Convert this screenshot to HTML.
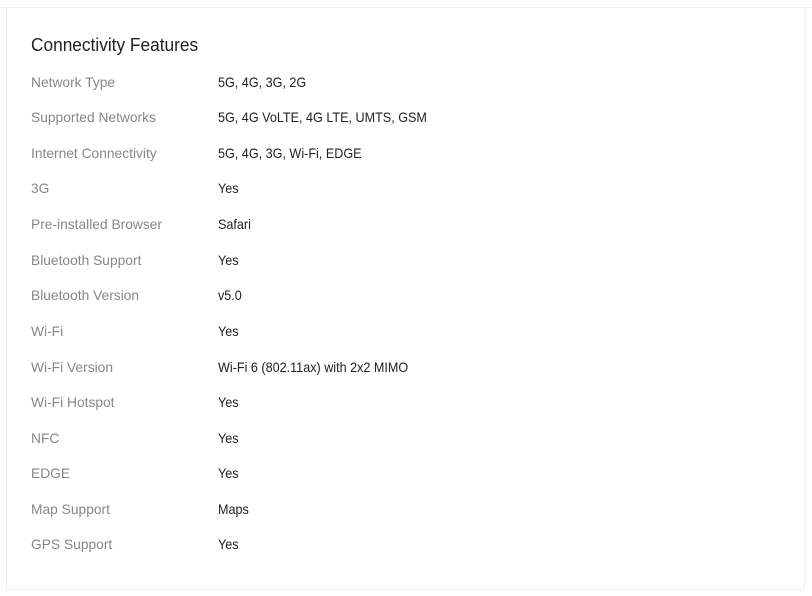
<!DOCTYPE html>
<html><head><meta charset="utf-8"><style>
body{margin:0;background:#fff;font-family:"Liberation Sans",Arial,sans-serif;}
.top{position:absolute;left:0;top:7px;width:812px;height:1px;background:#f0f0f0}
.box{position:absolute;left:6px;top:8px;width:797px;height:581px;border-left:1px solid #f0f0f0;border-right:1px solid #f0f0f0;border-bottom:1px solid #f0f0f0;background:#fff}
h2{position:absolute;left:31px;top:34px;margin:0;font-size:18px;font-weight:normal;color:#212121;line-height:22px;transform:scaleX(0.96);transform-origin:left}
.row{position:absolute;left:31px;font-size:14px;line-height:18px;height:18px}
.l{position:absolute;left:0;color:#878787;white-space:nowrap;transform:scaleX(0.985);transform-origin:left}
.v{position:absolute;left:187px;color:#212121;white-space:nowrap;transform:scaleX(0.9);transform-origin:left}
</style></head><body>
<div class="top"></div><div class="box"></div>
<h2>Connectivity Features</h2>
<div class="row" style="top:73px"><span class="l">Network Type</span><span class="v">5G, 4G, 3G, 2G</span></div>
<div class="row" style="top:108px"><span class="l">Supported Networks</span><span class="v">5G, 4G VoLTE, 4G LTE, UMTS, GSM</span></div>
<div class="row" style="top:144px"><span class="l">Internet Connectivity</span><span class="v">5G, 4G, 3G, Wi-Fi, EDGE</span></div>
<div class="row" style="top:179px"><span class="l">3G</span><span class="v">Yes</span></div>
<div class="row" style="top:215px"><span class="l">Pre-installed Browser</span><span class="v">Safari</span></div>
<div class="row" style="top:251px"><span class="l">Bluetooth Support</span><span class="v">Yes</span></div>
<div class="row" style="top:286px"><span class="l">Bluetooth Version</span><span class="v">v5.0</span></div>
<div class="row" style="top:322px"><span class="l">Wi-Fi</span><span class="v">Yes</span></div>
<div class="row" style="top:358px"><span class="l">Wi-Fi Version</span><span class="v">Wi-Fi 6 (802.11ax) with 2x2 MIMO</span></div>
<div class="row" style="top:393px"><span class="l">Wi-Fi Hotspot</span><span class="v">Yes</span></div>
<div class="row" style="top:429px"><span class="l">NFC</span><span class="v">Yes</span></div>
<div class="row" style="top:464px"><span class="l">EDGE</span><span class="v">Yes</span></div>
<div class="row" style="top:500px"><span class="l">Map Support</span><span class="v">Maps</span></div>
<div class="row" style="top:535px"><span class="l">GPS Support</span><span class="v">Yes</span></div>
</body></html>
